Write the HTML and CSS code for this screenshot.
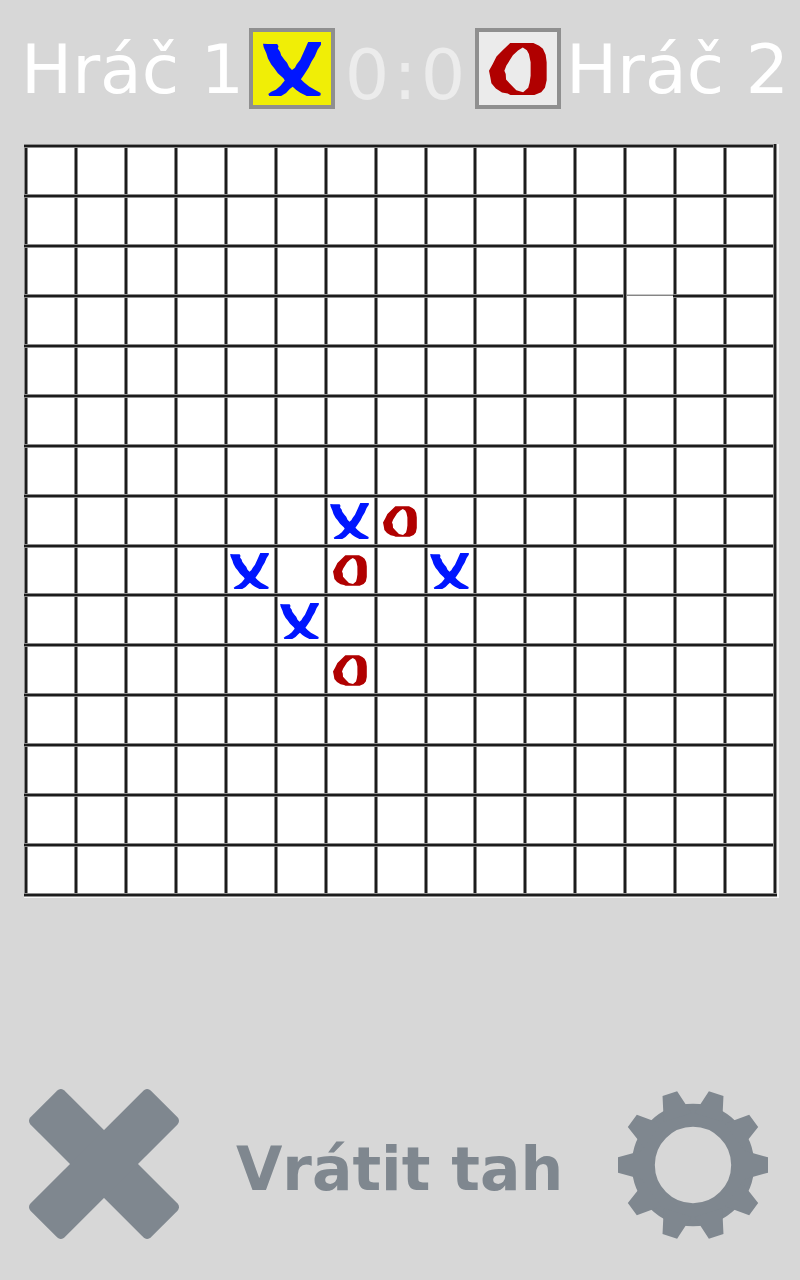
FILE: index.html
```html
<!DOCTYPE html>
<html lang="cs">
<head>
<meta charset="utf-8">
<meta name="viewport" content="width=device-width, initial-scale=1">
<title>Piškvorky</title>
<link rel="stylesheet" href="styles.css">
</head>
<body>
<svg class="symbols" aria-hidden="true">
  <symbol id="mark-x" viewBox="65 67 176 164">
    <path d="M65 72L79 73L108 73L112 80L110 87L117 97L120 107L130 121L138 130L144 143L153 152L162 145L167 135L178 121L191 92L202 67L241 67L241 75L231 90L222 111L212 127L204 144L191 164L180 180L190 190L205 202L222 212L240 222L240 229L235 231L198 231L178 221L166 213L155 203L146 210L135 222L120 231L84 231L81 225L90 218L104 212L118 200L131 184L127 177L110 162L98 145L90 135L80 117L75 101L67 83Z"/>
  </symbol>
  <symbol id="mark-o" viewBox="75 69 170 152">
    <path fill-rule="evenodd" d="M137 69L205 69L222 77L233 86L241 103L244 125L244 178L239 200L228 213L208 221L138 221L130 217L113 214L95 202L82 187L79 170L75 150L86 130L97 108L115 90ZM174 82L186 90L192 101L197 125L197 165L194 185L190 200L175 213L155 207L140 192L125 176L124 160L120 150L126 135L138 116L145 105L160 91Z"/>
  </symbol>
</svg>

<div class="game">
  <header class="scorebar">
    <span class="name">Hráč 1</span>
    <button class="badge badge-active" type="button" aria-label="Hráč 1, křížek">
      <svg class="badge-mark x"><use href="#mark-x"/></svg>
    </button>
    <div class="score"><span>0</span><span>:</span><span>0</span></div>
    <button class="badge" type="button" aria-label="Hráč 2, kolečko">
      <svg class="badge-mark o"><use href="#mark-o"/></svg>
    </button>
    <span class="name">Hráč 2</span>
  </header>

  <main class="board">
    <div class="cells" id="cells"></div>
  </main>

  <footer class="actions">
    <button class="action" type="button" aria-label="Zavřít">
      <svg class="action-icon" viewBox="-75 -75 150 150">
        <rect x="-85" y="-24" width="170" height="48" rx="5" transform="rotate(45)"/>
        <rect x="-85" y="-24" width="170" height="48" rx="5" transform="rotate(-45)"/>
      </svg>
    </button>
    <button class="action undo" type="button">Vrátit tah</button>
    <button class="action" type="button" aria-label="Nastavení">
      <svg class="action-icon" viewBox="-225 -228 450 450">
        <circle r="149" fill="none" stroke="currentColor" stroke-width="69"/>
        <path id="tooth" d="M150 -44L181 -35L225 -23L225 23L181 35L150 44Z"/>
        <use href="#tooth" transform="rotate(36)"/>
        <use href="#tooth" transform="rotate(72)"/>
        <use href="#tooth" transform="rotate(108)"/>
        <use href="#tooth" transform="rotate(144)"/>
        <use href="#tooth" transform="rotate(180)"/>
        <use href="#tooth" transform="rotate(216)"/>
        <use href="#tooth" transform="rotate(252)"/>
        <use href="#tooth" transform="rotate(288)"/>
        <use href="#tooth" transform="rotate(324)"/>
      </svg>
    </button>
  </footer>
</div>
<script src="board.js"></script>
</body>
</html>
```

FILE: styles.css
```css
* {
  box-sizing: border-box;
}

body {
  margin: 0;
  background: #d7d7d7;
  font-family: "DejaVu Sans", Verdana, sans-serif;
}

button {
  margin: 0;
  padding: 0;
  border: 0;
  background: none;
  font: inherit;
  color: inherit;
  cursor: pointer;
}

.symbols {
  position: absolute;
  width: 0;
  height: 0;
}

.game {
  display: flex;
  flex-direction: column;
  min-height: 100vh;
}

/* Players and score */
.scorebar {
  display: flex;
  align-items: flex-start;
  gap: 5px;
  height: 144px;
  padding: 28px 11px 0 21px;
}

.name {
  font-size: 68px;
  line-height: 84px;
  color: #fff;
  white-space: nowrap;
}

.badge {
  display: flex;
  flex: none;
  align-items: center;
  justify-content: center;
  width: 86px;
  height: 81px;
  border: 4px solid #8f8f8f;
  background: #ebebeb;
}

.badge-active {
  background: #f0ee06;
}

.badge-mark {
  width: 58px;
  height: 54px;
}

.x {
  fill: #0016ff;
}

.o {
  fill: #b00000;
}

.score {
  display: flex;
  flex: 1;
  justify-content: center;
  gap: 4px;
  font-size: 70px;
  line-height: 94px;
  color: #ececec;
}

/* Playing field */
.board {
  margin: 0 21px 0 24px;
  padding: 0 2px 1px 0;
  background: #f6f6f6;
}

.cells {
  --line: #8c8c8c 0 1px, #1c1c1c 1px 3px, #8c8c8c 3px 4px, transparent 4px;
  display: grid;
  grid-template-columns: repeat(15, 1fr);
  padding: 0 4px 4px 0;
  background:
    linear-gradient(to top, var(--line)),
    linear-gradient(to left, var(--line)),
    #fff;
}

.cell {
  display: flex;
  align-items: center;
  justify-content: center;
  aspect-ratio: 1;
  padding: 5px 0 0 2px;
  background:
    linear-gradient(to bottom, var(--line)),
    linear-gradient(to right, var(--line)),
    #fff;
}

.cell-faint {
  background:
    linear-gradient(to right, var(--line)),
    linear-gradient(to bottom, #c8c8c8 0 1px, #858585 1px 2px, transparent 2px),
    #fff;
}

.mark-x {
  width: 39px;
  height: 36px;
}

.mark-o {
  width: 34px;
  height: 31px;
}

/* Bottom controls */
.actions {
  display: flex;
  align-items: center;
  justify-content: space-between;
  margin-top: auto;
  padding: 40px 32px 41px 29px;
  color: #7f878f;
}

.action {
  display: block;
}

.action-icon {
  display: block;
  width: 150px;
  height: 150px;
  fill: currentColor;
}

.undo {
  padding: 10px 0 0 2px;
  font-size: 60px;
  font-weight: bold;
  line-height: 80px;
  white-space: nowrap;
}
```

FILE: board.js
```js
const SIZE = 15;
const marks = {
  "7,6": "x", "7,7": "o",
  "8,4": "x", "8,6": "o", "8,8": "x",
  "9,5": "x",
  "10,6": "o"
};
const cells = document.getElementById("cells");

for (let row = 0; row < SIZE; row++) {
  for (let col = 0; col < SIZE; col++) {
    const cell = document.createElement("button");
    const mark = marks[row + "," + col];
    cell.type = "button";
    cell.className = row === 3 && col === 12 ? "cell cell-faint" : "cell";
    cell.setAttribute("aria-label", `Řádek ${row + 1}, sloupec ${col + 1}`);
    if (mark) {
      cell.innerHTML = `<svg class="${mark} mark-${mark}"><use href="#mark-${mark}"/></svg>`;
    }
    cells.append(cell);
  }
}
```
